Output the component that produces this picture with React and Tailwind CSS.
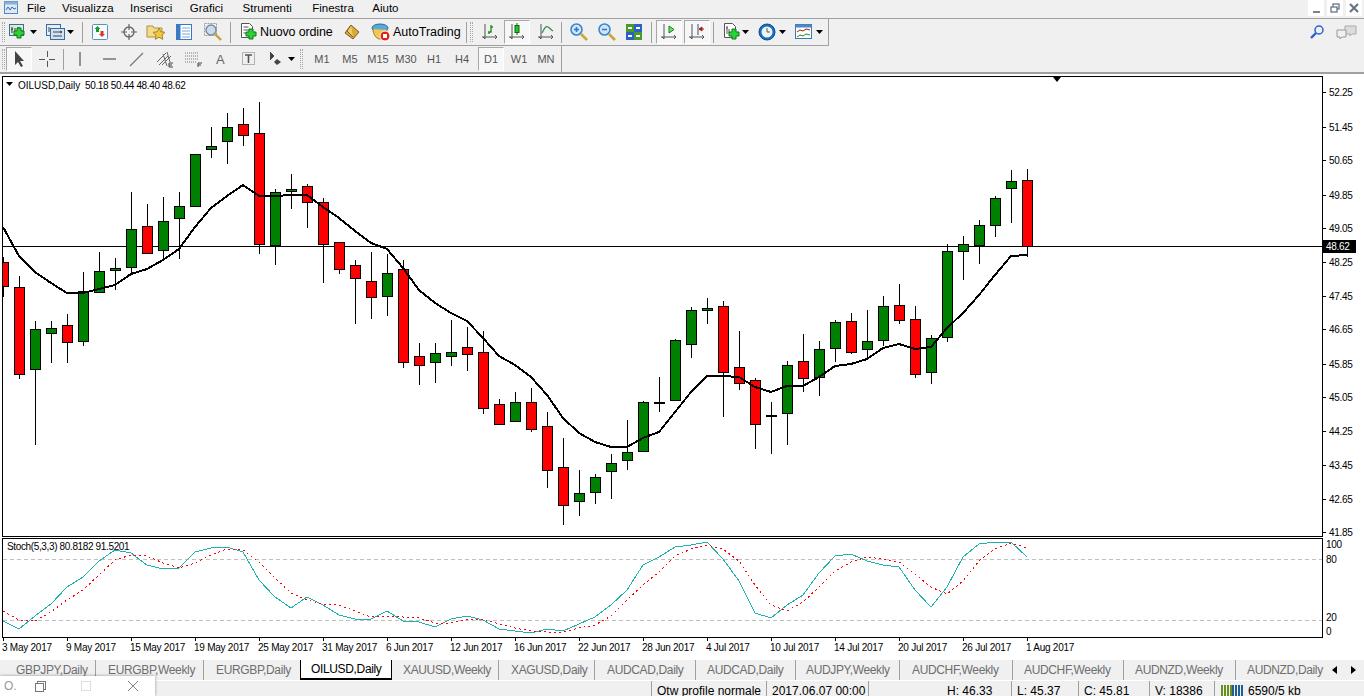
import React from "react";

// [type, wickTop, bodyTop, bodyBottom, wickBottom], one every 16px starting at x=3
const candles = [
  ["r", 257, 262, 286, 296], ["r", 276, 287, 374, 378], ["g", 321, 329, 369, 444], ["g", 321, 328, 333, 362],
  ["r", 314, 325, 342, 362], ["g", 272, 291, 341, 345], ["g", 252, 271, 292, 292], ["g", 258, 268, 270, 289],
  ["g", 192, 229, 267, 274], ["r", 204, 226, 253, 253], ["g", 197, 221, 250, 260], ["g", 192, 206, 218, 258],
  ["g", 154, 154, 206, 206], ["g", 127, 146, 149, 157], ["g", 113, 127, 141, 163], ["r", 108, 124, 135, 145],
  ["r", 102, 133, 244, 253], ["g", 189, 192, 245, 264], ["g", 174, 189, 191, 208], ["r", 184, 186, 202, 227],
  ["r", 198, 202, 244, 282], ["r", 242, 242, 269, 273], ["r", 260, 265, 278, 323], ["r", 252, 281, 297, 318],
  ["g", 254, 273, 296, 315], ["r", 260, 269, 362, 367], ["r", 343, 356, 365, 384], ["g", 343, 353, 362, 382],
  ["g", 320, 352, 356, 365], ["r", 327, 347, 354, 370], ["r", 331, 352, 408, 413], ["r", 399, 404, 424, 424],
  ["g", 392, 402, 421, 421], ["r", 388, 402, 429, 431], ["r", 412, 426, 470, 487], ["r", 438, 467, 505, 524],
  ["g", 470, 493, 501, 515], ["g", 474, 477, 492, 503], ["g", 454, 463, 471, 498], ["g", 420, 452, 460, 469],
  ["g", 401, 402, 451, 451], ["k", 377, 402, 403, 411], ["g", 339, 340, 400, 400], ["g", 307, 310, 344, 357],
  ["g", 298, 308, 310, 323], ["r", 301, 306, 372, 416], ["r", 331, 367, 383, 389], ["r", 378, 380, 424, 448],
  ["k", 402, 415, 416, 453], ["g", 361, 365, 413, 444], ["r", 334, 361, 378, 391], ["g", 341, 349, 377, 395],
  ["g", 320, 322, 348, 361], ["r", 313, 321, 352, 353], ["g", 310, 341, 349, 359], ["g", 296, 306, 340, 345],
  ["r", 284, 305, 320, 323], ["r", 306, 319, 374, 377], ["g", 335, 338, 372, 383], ["g", 244, 251, 337, 341],
  ["g", 236, 244, 251, 279], ["g", 220, 225, 245, 263], ["g", 196, 198, 225, 236], ["g", 170, 181, 188, 222],
  ["r", 169, 180, 246, 256],
];

const ma = [
  227, 256, 272, 283, 293, 293, 289, 285, 274, 269, 260, 249, 227, 208, 196, 185, 196, 196, 195, 195, 207, 218,
  231, 243, 249, 268, 290, 303, 313, 321, 338, 356, 365, 377, 395, 418, 433, 442, 447, 447, 438, 432, 412, 392,
  376, 376, 377, 387, 392, 386, 386, 377, 366, 364, 359, 348, 344, 349, 347, 328, 313, 295, 275, 256, 255,
];

const stochMain = [
  621, 629, 616, 604, 587, 577, 561, 550, 553, 565, 569, 568, 552, 548, 547, 552, 580, 597, 608, 597, 605, 615,
  619, 619, 611, 621, 622, 627, 619, 616, 620, 629, 631, 633, 629, 631, 624, 617, 605, 590, 565, 557, 547, 545,
  542, 559, 581, 613, 618, 605, 595, 573, 556, 554, 561, 565, 567, 590, 607, 587, 557, 544, 542, 542, 557,
];

const stochSignal = [
  611, 620, 621, 612, 600, 590, 575, 560, 555, 556, 563, 568, 563, 555, 549, 550, 562, 578, 593, 600, 604, 605,
  611, 617, 616, 617, 618, 623, 623, 619, 619, 624, 628, 631, 632, 632, 628, 625, 616, 600, 585, 572, 556, 549,
  545, 549, 561, 585, 605, 611, 602, 587, 571, 562, 557, 559, 562, 574, 587, 594, 581, 561, 549, 543, 548,
];

const prices = [
  ["52.25", 92], ["51.45", 127], ["50.65", 160], ["49.85", 195], ["49.05", 228], ["48.25", 262], ["47.45", 296],
  ["46.65", 329], ["45.85", 364], ["45.05", 397], ["44.25", 431], ["43.45", 465], ["42.65", 499], ["41.85", 532],
];

const dates = [
  "3 May 2017", "9 May 2017", "15 May 2017", "19 May 2017", "25 May 2017", "31 May 2017", "6 Jun 2017", "12 Jun 2017",
  "16 Jun 2017", "22 Jun 2017", "28 Jun 2017", "4 Jul 2017", "10 Jul 2017", "14 Jul 2017", "20 Jul 2017", "26 Jul 2017",
  "1 Aug 2017",
];

const tabs = [
  { label: "GBPJPY,Daily", cls: "w-[96px] pl-[16px] border-r border-[#a0a0a0]" },
  { label: "EURGBP,Weekly", cls: "w-[108px] pl-[12px] border-r border-[#a0a0a0]" },
  { label: "EURGBP,Daily", cls: "w-[96px] pl-[12px]" },
  { label: "OILUSD,Daily", cls: "w-[92px] pl-[10px] bg-white text-black border-x border-b-2 border-black", active: true },
  { label: "XAUUSD,Weekly", cls: "w-[107px] pl-[11px] border-r border-[#a0a0a0]" },
  { label: "XAGUSD,Daily", cls: "w-[96px] pl-[12px] border-r border-[#a0a0a0]" },
  { label: "AUDCAD,Daily", cls: "w-[101px] pl-[12px] border-r border-[#a0a0a0]" },
  { label: "AUDCAD,Daily", cls: "w-[100px] pl-[11px] border-r border-[#a0a0a0]" },
  { label: "AUDJPY,Weekly", cls: "w-[104px] pl-[10px] border-r border-[#a0a0a0]" },
  { label: "AUDCHF,Weekly", cls: "w-[113px] pl-[12px] border-r border-[#a0a0a0]" },
  { label: "AUDCHF,Weekly", cls: "w-[111px] pl-[11px] border-r border-[#a0a0a0]" },
  { label: "AUDNZD,Weekly", cls: "w-[112px] pl-[11px] border-r border-[#a0a0a0]" },
  { label: "AUDNZD,Daily", cls: "w-[92px] pl-[11px]" },
];

const toPoints = (values) => values.map((y, i) => `${3 + i * 16},${y}`).join(" ");

function Candle({ c, x }) {
  const [type, wickTop, bodyTop, bodyBottom, wickBottom] = c;
  const fill = type === "r" ? "#ff0000" : type === "g" ? "#008000" : "#000000";
  return (
    <g shapeRendering="crispEdges">
      <rect x={x} y={wickTop} width="1" height={wickBottom - wickTop + 1} fill="#000" />
      <rect x={x - 4.5} y={bodyTop + 0.5} width="10" height={bodyBottom - bodyTop} fill={fill} stroke="#000" />
    </g>
  );
}

function Drop() {
  return (
    <svg width="7" height="4" viewBox="0 0 7 4" className="shrink-0">
      <path d="M0 0h7L3.5 4z" fill="#000" />
    </svg>
  );
}

function Icon({ children }) {
  return (
    <svg width="20" height="20" viewBox="0 0 20 20" className="shrink-0">
      {children}
    </svg>
  );
}

function Plus({ x = 10, y = 10 }) {
  return (
    <path
      d={`M${x + 3} ${y}h4v3h3v4h-3v3h-4v-3h-3v-4h3z`}
      fill="#2fd03a"
      stroke="#0a7a12"
      strokeWidth="1"
    />
  );
}

function Axes() {
  return <path d="M5 2v15M2 15h15M3 15l2 2M15 13l2 2-2 2" fill="none" stroke="#555" strokeWidth="1" />;
}

function Sep() {
  return <div className="h-[21px] w-px shrink-0 bg-[#a0a0a0]" />;
}

function Grip() {
  return <div className="h-[20px] w-[3px] shrink-0 border-x border-dotted border-[#a8a8a8]" />;
}

function ActiveBox({ children, cls }) {
  return (
    <div className={`flex h-[24px] w-[26px] shrink-0 items-center justify-center border border-[#a8a8a8] border-r-white border-b-white bg-[#f7f7f7] ${cls || ""}`}>
      {children}
    </div>
  );
}

function NewChartIcon() {
  return (
    <Icon>
      <rect x="1.5" y="2.5" width="14" height="11" fill="#d8ecd8" stroke="#3c6c9c" />
      <path d="M4 5v6M3 7h2M7 6v5M9 6h3M12 9h3" stroke="#333" fill="none" />
      <Plus x={6} y={6} />
    </Icon>
  );
}

function ProfileIcon() {
  return (
    <Icon>
      <rect x="0.5" y="2.5" width="14" height="11" fill="#e4eef8" stroke="#3c6c9c" />
      <rect x="4.5" y="6.5" width="14" height="11" fill="#d0e2f4" stroke="#3c6c9c" />
      <path d="M3 5v5M7 10h9M7 14h9M14 9l2 1-2 1" stroke="#444" fill="none" />
    </Icon>
  );
}

function MarketWatchIcon() {
  return (
    <Icon>
      <rect x="2.5" y="2.5" width="15" height="15" rx="1" fill="#f8fbff" stroke="#5a90c8" />
      <path d="M7.5 4l3 3H9v3H6V7H4.5z" fill="#1a9a2a" />
      <path d="M12 15l-3-3h1.5V9h3v3H15z" fill="#d83a20" />
    </Icon>
  );
}

function CrossCircleIcon() {
  return (
    <Icon>
      <circle cx="10" cy="10" r="5" fill="none" stroke="#666" strokeWidth="1.4" />
      <path d="M10 2v6M10 12v6M2 10h6M12 10h6" stroke="#666" strokeWidth="1.2" />
    </Icon>
  );
}

function FolderStarIcon() {
  return (
    <Icon>
      <path d="M1 4h6l1 2h8v9H1z" fill="#f4dc8c" stroke="#b09040" />
      <path d="M13 6l1.8 3.8 4.2.5-3 2.9.8 4.1-3.8-2-3.8 2 .8-4.1-3-2.9 4.2-.5z" fill="#f0c848" stroke="#a88420" />
    </Icon>
  );
}

function NavigatorIcon() {
  return (
    <Icon>
      <rect x="2.5" y="2.5" width="15" height="15" fill="#fff" stroke="#3a78b8" />
      <rect x="2.5" y="2.5" width="4" height="15" fill="#3a78c8" />
      <path d="M8 6h8M8 9h8M8 12h8M8 15h8" stroke="#7aa8d8" />
    </Icon>
  );
}

function TesterIcon() {
  return (
    <svg width="20" height="20" viewBox="0 0 20 20" className="shrink-0">
      <rect x="1.5" y="1.5" width="12" height="12" fill="#f0f0f0" stroke="#999" strokeDasharray="2 1" />
      <circle cx="8" cy="8" r="5" fill="#c8dcf0" stroke="#7a8a9a" strokeWidth="1.4" />
      <path d="M12 12l6 6" stroke="#c8a030" strokeWidth="2.4" />
    </svg>
  );
}

function NewOrderIcon() {
  return (
    <Icon>
      <path d="M2.5 1.5h8l3 3v11h-11z" fill="#fff" stroke="#555" />
      <path d="M4.5 5h5M4.5 8h7M4.5 11h4" stroke="#555" />
      <Plus x={7} y={7} />
    </Icon>
  );
}

function ExpertIcon() {
  return (
    <Icon>
      <path d="M9 3l8 7-6 7-8-6z" fill="#d8a838" stroke="#80602a" />
      <path d="M9 3L5 9l6 6" fill="#f0cc68" stroke="#80602a" />
    </Icon>
  );
}

function AutoTradingIcon() {
  return (
    <Icon>
      <ellipse cx="9" cy="6" rx="8" ry="4" fill="#58a8d8" stroke="#2a6a9a" />
      <path d="M2 7c0 5 3 10 7 10s7-4 7-9" fill="#f0c850" stroke="#a08020" />
      <circle cx="14" cy="14" r="5" fill="#e02010" stroke="#fff" />
      <rect x="12" y="12" width="4" height="4" fill="#fff" />
    </Icon>
  );
}

function BarChartIcon() {
  return (
    <Icon>
      <Axes />
      <path d="M9 12v-2h2V3M9 10H8M11 5h2" stroke="#1a8a1a" fill="none" strokeWidth="1.3" />
    </Icon>
  );
}

function CandleIcon() {
  return (
    <Icon>
      <Axes />
      <path d="M10 1v12" stroke="#0a6a0a" />
      <rect x="8" y="3.5" width="4" height="7" fill="#22c32a" stroke="#0a6a0a" />
    </Icon>
  );
}

function LineChartIcon() {
  return (
    <Icon>
      <Axes />
      <path d="M6 11c3-6 4-7 6-6s3 3 5 4" fill="none" stroke="#2a8a4a" strokeWidth="1.2" />
    </Icon>
  );
}

function ZoomIcon({ plus }) {
  return (
    <Icon>
      <circle cx="7.5" cy="7.5" r="5.5" fill="#cfe6fa" stroke="#3a88d0" strokeWidth="1.6" />
      <path d="M5 7.5h5" stroke="#3a78c0" strokeWidth="1.6" />
      {plus && <path d="M7.5 5v5" stroke="#3a78c0" strokeWidth="1.6" />}
      <path d="M12 12l6 6" stroke="#c8a838" strokeWidth="2.6" />
    </Icon>
  );
}

function TileIcon() {
  return (
    <Icon>
      <rect x="2" y="2" width="8" height="8" fill="#4a9a2a" />
      <rect x="10" y="2" width="8" height="8" fill="#2a60c8" />
      <rect x="2" y="10" width="8" height="8" fill="#2a60c8" />
      <rect x="10" y="10" width="8" height="8" fill="#4a9a2a" />
      <path d="M4 6h4M12 6h4M4 14h4M12 14h4" stroke="#fff" strokeWidth="2" />
    </Icon>
  );
}

function ShiftIcon() {
  return (
    <Icon>
      <Axes />
      <path d="M10 4v7l5-3.5z" fill="#7ad87a" stroke="#0a8a0a" />
    </Icon>
  );
}

function AutoScrollIcon() {
  return (
    <Icon>
      <Axes />
      <path d="M11 2v11" stroke="#1a5a9a" />
      <path d="M12 7h5M12 7l3-2v4z" stroke="#b02010" fill="#b02010" />
    </Icon>
  );
}

function TemplateNewIcon() {
  return (
    <Icon>
      <path d="M2.5 1.5h8l3 3v11h-11z" fill="#fff" stroke="#555" />
      <path d="M5 4v8M4 6h2M7 7v4" stroke="#555" />
      <Plus x={7} y={7} />
    </Icon>
  );
}

function ClockIcon() {
  return (
    <Icon>
      <circle cx="10" cy="10" r="8" fill="#1a70c0" stroke="#0a4a90" />
      <circle cx="10" cy="10" r="5.5" fill="#f0f4f8" />
      <path d="M10 6v4h3" fill="none" stroke="#555" />
    </Icon>
  );
}

function IndicatorIcon() {
  return (
    <Icon>
      <rect x="1.5" y="2.5" width="16" height="14" fill="#fff" stroke="#3a78b8" />
      <rect x="1.5" y="2.5" width="16" height="3" fill="#4a88c8" />
      <path d="M3 10l3-2 3 1 3-2 4 1" stroke="#a02010" fill="none" />
      <path d="M3 15l3-2 3 1 3-2 4 1" stroke="#2a8a2a" fill="none" />
    </Icon>
  );
}

function ArrowCursor() {
  return (
    <svg width="12" height="16" viewBox="0 0 12 16" className="shrink-0">
      <path d="M2 0v14l3-3 3 5 2-1-3-5h4z" fill="#444" />
    </svg>
  );
}

function Crosshair() {
  return (
    <svg width="16" height="16" viewBox="0 0 16 16" className="shrink-0" shapeRendering="crispEdges">
      <path d="M8 0v6M8 10v6M0 8h6M10 8h6" stroke="#555" />
    </svg>
  );
}

function DrawTool({ children }) {
  return (
    <svg width="18" height="18" viewBox="0 0 18 18" className="shrink-0">
      {children}
    </svg>
  );
}

function Period({ children, cls }) {
  return (
    <div className={`flex h-full w-[28px] shrink-0 items-center justify-center text-[11px] text-[#555] ${cls || ""}`}>
      {children}
    </div>
  );
}

function PriceAxis() {
  return (
    <svg width="41" height="461" viewBox="1323 76 41 461" className="block shrink-0">
      {prices.map(([label, y]) => (
        <g key={label}>
          <rect x="1323" y={y} width="3" height="1" fill="#000" />
          <text x="1329" y={y + 4} fontSize="10" letterSpacing="-0.3" fill="#000">
            {label}
          </text>
        </g>
      ))}
      <rect x="1323" y="240" width="33" height="13" fill="#000" />
      <text x="1326" y="250" fontSize="10" letterSpacing="-0.3" fill="#fff">
        48.62
      </text>
    </svg>
  );
}

function StochAxis() {
  return (
    <svg width="41" height="100" viewBox="1323 538 41 100" className="block shrink-0">
      <text x="1326" y="548" fontSize="10" letterSpacing="-0.3" fill="#000">100</text>
      <text x="1326" y="563" fontSize="10" letterSpacing="-0.3" fill="#000">80</text>
      <text x="1326" y="621" fontSize="10" letterSpacing="-0.3" fill="#000">20</text>
      <text x="1326" y="635" fontSize="10" letterSpacing="-0.3" fill="#000">0</text>
    </svg>
  );
}

function StatusCell({ children, cls }) {
  return <div className={`h-full shrink-0 border-r border-[#a0a0a0] pl-[5px] pt-[3px] ${cls}`}>{children}</div>;
}

export default function App() {
  return (
    <div className="relative flex h-[696px] w-[1364px] flex-col overflow-hidden bg-[#f0f0f0] font-['Liberation_Sans',Arial,sans-serif] text-[12px] text-black">
      {/* menu bar */}
      <div className="flex h-[19px] shrink-0 items-start border-b border-[#a0a0a0]">
        <svg width="16" height="15" viewBox="0 0 16 15" className="ml-[3px] mt-0 shrink-0">
          <rect x="1.5" y="1.5" width="13" height="12" fill="#dbe8f6" stroke="#5a88b8" />
          <rect x="1.5" y="1.5" width="13" height="3" fill="#8ab0d8" />
          <path d="M3 10l2-3 2 3 2-3 2 2 2-1" fill="none" stroke="#3a68a8" />
        </svg>
        <div className="ml-[8px] flex h-[17px] items-center gap-[16.5px] text-[11.5px]">
          <span>File</span>
          <span>Visualizza</span>
          <span>Inserisci</span>
          <span className="ml-[1px]">Grafici</span>
          <span className="ml-[3px]">Strumenti</span>
          <span className="ml-[4px]">Finestra</span>
          <span className="ml-[2px]">Aiuto</span>
        </div>
        <div className="ml-auto mr-[2px] flex gap-[3px]">
          <div className="flex h-[16px] w-[16px] items-end justify-center bg-white pb-[3px]">
            <div className="h-[2px] w-[7px] bg-[#7a8594]" />
          </div>
          <div className="flex h-[16px] w-[16px] items-center justify-center bg-white">
            <svg width="10" height="10" viewBox="0 0 10 10" fill="none" stroke="#6a7584" strokeWidth="1.3">
              <rect x="3" y="1" width="6" height="5" />
              <rect x="1" y="4" width="6" height="5" fill="#fff" />
            </svg>
          </div>
          <div className="flex h-[16px] w-[16px] items-center justify-center bg-white">
            <svg width="10" height="10" viewBox="0 0 10 10" stroke="#6a7584" strokeWidth="2.2">
              <path d="M1 1l8 8M9 1l-8 8" />
            </svg>
          </div>
        </div>
      </div>

      {/* main toolbar */}
      <div className="flex h-[27px] shrink-0">
        <div className="flex h-[27px] w-[829px] shrink-0 items-center border-b border-r border-[#a0a0a0] pl-[2px]">
          <Grip />
          <div className="ml-[3px]"><NewChartIcon /></div>
          <div className="ml-[2px]"><Drop /></div>
          <div className="ml-[9px]"><ProfileIcon /></div>
          <div className="ml-[1px]"><Drop /></div>
          <div className="ml-[8px]"><Sep /></div>
          <div className="ml-[7px]"><MarketWatchIcon /></div>
          <div className="ml-[9px]"><CrossCircleIcon /></div>
          <div className="ml-[7px]"><FolderStarIcon /></div>
          <div className="ml-[8px]"><NavigatorIcon /></div>
          <div className="ml-[9px]"><TesterIcon /></div>
          <div className="ml-[7px]"><Sep /></div>
          <div className="ml-[8px]"><NewOrderIcon /></div>
          <span className="ml-[1px] w-[73px] shrink-0 whitespace-nowrap text-[12.5px] tracking-[-0.15px]">Nuovo ordine</span>
          <div className="ml-[9px]"><ExpertIcon /></div>
          <div className="ml-[9px]"><AutoTradingIcon /></div>
          <span className="ml-[2px] w-[68px] shrink-0 whitespace-nowrap text-[12.5px]">AutoTrading</span>
          <div className="ml-[5px]"><Sep /></div>
          <div className="ml-[3px]"><Grip /></div>
          <div className="ml-[7px]"><BarChartIcon /></div>
          <ActiveBox cls="ml-[4px]"><CandleIcon /></ActiveBox>
          <div className="ml-[6px]"><LineChartIcon /></div>
          <div className="ml-[5px]"><Sep /></div>
          <div className="ml-[7px]"><ZoomIcon plus /></div>
          <div className="ml-[8px]"><ZoomIcon /></div>
          <div className="ml-[7px]"><TileIcon /></div>
          <div className="ml-[7px]"><Sep /></div>
          <ActiveBox cls="ml-[4px]"><ShiftIcon /></ActiveBox>
          <ActiveBox cls="ml-[2px]"><AutoScrollIcon /></ActiveBox>
          <div className="ml-[3px]"><Sep /></div>
          <div className="ml-[8px]"><TemplateNewIcon /></div>
          <div className="ml-[0px]"><Drop /></div>
          <div className="ml-[8px]"><ClockIcon /></div>
          <div className="ml-[2px]"><Drop /></div>
          <div className="ml-[8px]"><IndicatorIcon /></div>
          <div className="ml-[2px]"><Drop /></div>
        </div>
        <div className="ml-auto mr-[6px] flex items-start gap-[11px] pt-[5px]">
          <svg width="16" height="16" viewBox="0 0 16 16" fill="none">
            <circle cx="10" cy="6" r="4" stroke="#2a62c8" strokeWidth="1.5" />
            <path d="M7 9l-5 5" stroke="#2a62c8" strokeWidth="2.4" />
          </svg>
          <svg width="22" height="16" viewBox="0 0 22 16">
            <path d="M9 2h11v8h-4l-2 2v-2H9z" fill="#dcdcdc" stroke="#aaa" />
            <path d="M1 6h9v7H6l-2 2v-2H1z" fill="#efefef" stroke="#999" />
          </svg>
        </div>
      </div>

      {/* drawing + periods toolbar */}
      <div className="flex h-[28px] shrink-0 border-b-2 border-[#a0a0a0]">
        <div className="flex h-[26px] w-[562px] shrink-0 items-center border-r border-[#a0a0a0] pl-[2px]">
          <Grip />
          <ActiveBox cls="ml-[1px]"><ArrowCursor /></ActiveBox>
          <div className="ml-[7px]"><Crosshair /></div>
          <div className="ml-[8px]"><Sep /></div>
          <div className="ml-[7px]">
            <DrawTool><path d="M9 2v14" stroke="#555" strokeWidth="1.2" /></DrawTool>
          </div>
          <div className="ml-[12px]">
            <DrawTool><path d="M2 9h13" stroke="#555" strokeWidth="1.2" /></DrawTool>
          </div>
          <div className="ml-[9px]">
            <DrawTool><path d="M2 16L15 3" stroke="#777" strokeWidth="1.2" /></DrawTool>
          </div>
          <div className="ml-[10px]">
            <DrawTool><path d="M1 12l9-9M3 15l9-9M6 15l9-9M7 4l4 12M11 2l3 10" stroke="#666" strokeWidth="1" fill="none" /><path d="M13 13h4M13 13v4h4M13 15h3" stroke="#444" fill="none" /></DrawTool>
          </div>
          <div className="ml-[11px]">
            <DrawTool><path d="M0 3h14M0 6h14M0 9h14M0 12h12" stroke="#777" strokeDasharray="1 1" /><path d="M13 13h4M13 13v4M13 15h3" stroke="#444" fill="none" /></DrawTool>
          </div>
          <span className="ml-[13px] w-[9px] shrink-0 text-[13px] leading-none text-[#666]">A</span>
          <div className="ml-[15px]">
            <DrawTool><rect x="2.5" y="2.5" width="12" height="12" fill="none" stroke="#777" strokeDasharray="1 1" /><path d="M5 5h7M8.5 5v8" stroke="#555" strokeWidth="1.6" /></DrawTool>
          </div>
          <div className="ml-[9px]">
            <DrawTool><path d="M3 2l4 4-4 4M3 6h1" fill="#444" stroke="#444" /><path d="M10 9l4 3-4 3-3-3z" fill="#444" /></DrawTool>
          </div>
          <div className="ml-[3px]"><Drop /></div>
          <div className="ml-[5px]"><Grip /></div>
          <div className="ml-[5px] flex h-full items-center">
            <Period>M1</Period>
            <Period>M5</Period>
            <Period>M15</Period>
            <Period>M30</Period>
            <Period>H1</Period>
            <Period>H4</Period>
            <ActiveBox cls="ml-[2px] text-[11px] text-[#555]">D1</ActiveBox>
            <Period cls="ml-[1px]">W1</Period>
            <Period cls="ml-[-1px]">MN</Period>
          </div>
        </div>
      </div>

      {/* chart */}
      <div className="flex min-h-0 flex-1 flex-col bg-white pt-[2px]">
        <div className="flex h-[461px] shrink-0">
          <div className="ml-[2px] h-[461px] w-[1321px] shrink-0 border-x border-y border-black">
            <svg width="1319" height="459" viewBox="3 77 1319 459" className="block">
              <rect x="3" y="246" width="1319" height="1" fill="#000" shapeRendering="crispEdges" />
              {candles.map((c, i) => (
                <Candle key={i} c={c} x={3 + i * 16} />
              ))}
              <polyline points={toPoints(ma)} fill="none" stroke="#000" strokeWidth="2" shapeRendering="crispEdges" />
              <path d="M1053 77h8l-4 5z" fill="#000" />
              <path d="M6 82h7l-3.5 4z" fill="#000" />
              <text x="18" y="88.5" fontSize="10" fill="#000">
                OILUSD,Daily
                <tspan x="85" letterSpacing="-0.35">50.18 50.44 48.40 48.62</tspan>
              </text>
            </svg>
          </div>
          <PriceAxis />
        </div>
        <div className="mt-px flex h-[100px] shrink-0">
          <div className="ml-[2px] h-[100px] w-[1321px] shrink-0 border-x border-y border-black">
            <svg width="1319" height="98" viewBox="3 539 1319 98" className="block">
              <line x1="3" x2="1322" y1="559" y2="559" stroke="#c0c0c0" strokeDasharray="4 3" shapeRendering="crispEdges" />
              <line x1="3" x2="1322" y1="620" y2="620" stroke="#c0c0c0" strokeDasharray="4 3" shapeRendering="crispEdges" />
              <polyline points={toPoints(stochMain)} fill="none" stroke="#20b2aa" shapeRendering="crispEdges" />
              <polyline points={toPoints(stochSignal)} fill="none" stroke="#ff0000" strokeDasharray="2 3" shapeRendering="crispEdges" />
              <text x="7" y="550" fontSize="10" letterSpacing="-0.36" fill="#000">Stoch(5,3,3) 80.8182 91.5201</text>
            </svg>
          </div>
          <StochAxis />
        </div>
        <div className="flex pl-[2px] text-[10px] leading-[11px] tracking-[-0.25px]">
          {dates.map((d) => (
            <div key={d} className="w-[64px] shrink-0">
              <div className="ml-px h-[3px] w-px bg-black" />
              <div className="whitespace-nowrap pt-px">{d}</div>
            </div>
          ))}
        </div>
      </div>

      {/* chart tabs */}
      <div className="flex h-[20px] shrink-0 items-stretch text-[12px] tracking-[-0.35px] text-[#6e6e6e]">
        {tabs.map((t, i) => (
          <div key={i} className={`flex shrink-0 items-center whitespace-nowrap ${t.cls}`}>
            {t.label}
          </div>
        ))}
        <div className="ml-[4px] flex items-center gap-[14px]">
          <svg width="5" height="8" viewBox="0 0 5 8"><path d="M5 0v8L0 4z" fill="#000" /></svg>
          <svg width="5" height="8" viewBox="0 0 5 8"><path d="M0 0v8l5-4z" fill="#000" /></svg>
        </div>
      </div>

      {/* status bar */}
      <div className="flex h-[16px] shrink-0 border-t border-white pl-[651px] text-[12px] leading-[14px] text-black">
        <StatusCell cls="w-[116px] border-l">Otw profile normale</StatusCell>
        <StatusCell cls="w-[102px]">2017.06.07 00:00</StatusCell>
        <div className="h-full w-[73px] shrink-0" />
        <StatusCell cls="w-[70px]">H: 46.33</StatusCell>
        <StatusCell cls="w-[67px]">L: 45.37</StatusCell>
        <StatusCell cls="w-[71px]">C: 45.81</StatusCell>
        <StatusCell cls="w-[65px]">V: 18386</StatusCell>
        <div className="flex h-full items-start pl-[6px] pt-[3px]">
          <svg width="22" height="14" viewBox="0 0 22 14" className="mr-[5px]" shapeRendering="crispEdges">
            <rect x="0" y="1" width="11" height="13" fill="#6b8e23" />
            <rect x="11" y="1" width="11" height="13" fill="#1f5f8f" />
            <path d="M2 1v13M5 1v13M8 1v13M13 1v13M16 1v13M19 1v13" stroke="#f0f0f0" />
          </svg>
          6590/5 kb
        </div>
      </div>

      {/* windows title bar lying over the bottom of the page */}
      <div className="absolute bottom-0 left-0 flex h-[20px] w-[155px] items-center bg-white pl-[4px] text-[12px] text-[#999] shadow-[0_0_3px_rgba(0,0,0,0.4)]">
        <span className="w-[12px] shrink-0">O.</span>
        <svg width="11" height="11" viewBox="0 0 11 11" fill="none" stroke="#777" className="ml-[19px] shrink-0">
          <rect x="2.5" y="0.5" width="8" height="8" />
          <rect x="0.5" y="2.5" width="8" height="8" fill="#fff" />
        </svg>
        <div className="ml-[35px] h-[10px] w-[10px] shrink-0 border border-[#ddd]" />
        <svg width="12" height="12" viewBox="0 0 12 12" stroke="#888" className="ml-[36px] shrink-0">
          <path d="M1 1l10 10M11 1L1 11" />
        </svg>
      </div>
    </div>
  );
}
